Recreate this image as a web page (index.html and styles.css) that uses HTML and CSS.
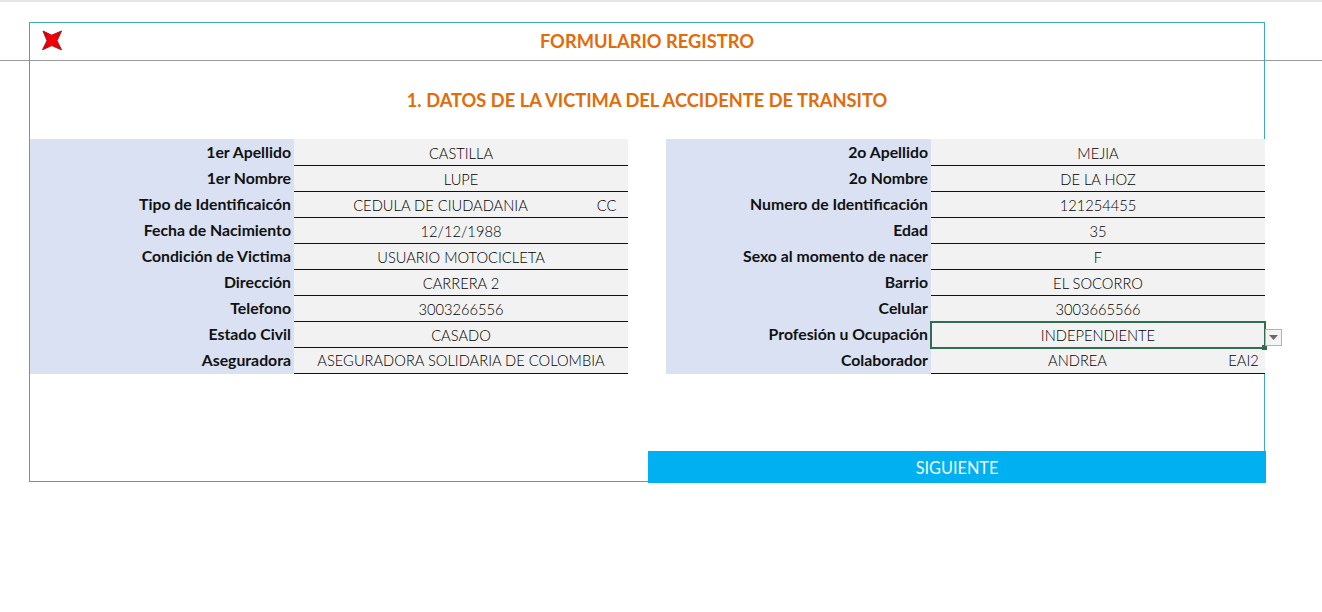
FILE: index.html
```html
<!DOCTYPE html>
<html lang="es">
<head>
<meta charset="utf-8">
<title>Formulario Registro</title>
<link rel="stylesheet" href="styles.css">
</head>
<body>
<div class="topline"></div>
<div class="ruler"></div>
<main class="frame">
  <header class="head">
    <svg class="logo" width="22" height="22" viewBox="0 0 22 22" aria-hidden="true">
      <defs><radialGradient id="g"><stop offset="0.6" stop-color="#f00008"/><stop offset="1" stop-color="#b80a12"/></radialGradient></defs>
      <path d="M2 2 L10.7 6.2 L20.5 2 L16 11.7 L20.5 20.8 L10.7 16.6 L1.5 20.8 L6 11.7 Z" fill="url(#g)" stroke="#c40c14" stroke-width="1" stroke-linejoin="round"/>
    </svg>
    <h1 class="title">FORMULARIO REGISTRO</h1>
  </header>
  <h2 class="subtitle">1. DATOS DE LA VICTIMA DEL ACCIDENTE DE TRANSITO</h2>
  <section class="columns">
    <div class="table">
      <div class="row"><div class="label">1er Apellido</div><div class="value">CASTILLA</div></div>
      <div class="row"><div class="label">1er Nombre</div><div class="value">LUPE</div></div>
      <div class="row"><div class="label">Tipo de Identificaicón</div><div class="value split"><span>CEDULA DE CIUDADANIA</span><span class="code">CC</span></div></div>
      <div class="row"><div class="label">Fecha de Nacimiento</div><div class="value">12/12/1988</div></div>
      <div class="row"><div class="label">Condición de Victima</div><div class="value">USUARIO MOTOCICLETA</div></div>
      <div class="row"><div class="label">Dirección</div><div class="value">CARRERA 2</div></div>
      <div class="row"><div class="label">Telefono</div><div class="value">3003266556</div></div>
      <div class="row"><div class="label">Estado Civil</div><div class="value">CASADO</div></div>
      <div class="row"><div class="label">Aseguradora</div><div class="value">ASEGURADORA SOLIDARIA DE COLOMBIA</div></div>
    </div>
    <div class="table wide">
      <div class="row"><div class="label">2o Apellido</div><div class="value">MEJIA</div></div>
      <div class="row"><div class="label">2o Nombre</div><div class="value">DE LA HOZ</div></div>
      <div class="row"><div class="label">Numero de Identificación</div><div class="value">121254455</div></div>
      <div class="row"><div class="label">Edad</div><div class="value">35</div></div>
      <div class="row"><div class="label">Sexo al momento de nacer</div><div class="value">F</div></div>
      <div class="row"><div class="label">Barrio</div><div class="value">EL SOCORRO</div></div>
      <div class="row"><div class="label">Celular</div><div class="value">3003665566</div></div>
      <div class="row"><div class="label">Profesión u Ocupación</div><div class="value selected">INDEPENDIENTE<i class="handle"></i><b class="drop"><svg width="9" height="5" viewBox="0 0 9 5" aria-hidden="true"><path d="M0 0H9L4.5 5Z" fill="#6a6a6a"/></svg></b></div></div>
      <div class="row"><div class="label">Colaborador</div><div class="value split"><span>ANDREA</span><span class="code">EAI2</span></div></div>
    </div>
  </section>
  <div class="actions"><button class="next">SIGUIENTE</button></div>
</main>
</body>
</html>
```
FILE: styles.css
```css
* { box-sizing: border-box; }
html, body { margin: 0; padding: 0; background: #fff; }
body {
  height: 612px;
  overflow: hidden;
  font-family: Lato, "Open Sans", "Liberation Sans", sans-serif;
  color: #000;
  position: relative;
  padding: 22px 0 0 29px;
}
.topline { position: absolute; left: 0; right: 0; top: 0; height: 2px; background: #e6e6e6; }
.ruler { position: absolute; left: 0; right: 0; top: 60px; height: 1px; background: #9a9a9a; }
.frame {
  position: relative;
  width: 1236px;
  height: 460px;
  border: 1px solid #3fa9c2;
  display: flex;
  flex-direction: column;
}
.head {
  height: 37px;
  padding-bottom: 2px;
  display: flex;
  align-items: center;
  justify-content: center;
  position: relative;
}
.logo { position: absolute; left: 11px; top: 6px; }
.title {
  margin: 0;
  font-size: 18.3px;
  font-weight: 700;
  color: #e26b0a;
}
.subtitle {
  margin: 0;
  height: 79px;
  padding-top: 27px;
  text-align: center;
  font-size: 18.3px;
  line-height: 26px;
  font-weight: 700;
  color: #e26b0a;
}
.columns { display: flex; gap: 38px; }
.table { width: 598px; flex: none; display: flex; flex-direction: column; }
.wide { width: 599px; }
.row { display: flex; height: 26px; }
.row:first-child { height: 27px; }
.label {
  width: 264px;
  flex: none;
  background: #d9e1f2;
  text-align: right;
  padding-right: 3px;
  font-size: 15.8px;
  font-weight: 700;
  line-height: 24px;
  color: #111;
}
.wide .label { width: 265px; }
.row:first-child .label { line-height: 26px; }
.value {
  flex: 1;
  position: relative;
  background: #f2f2f2;
  border-bottom: 1px solid #111;
  text-align: center;
  font-size: 14.7px;
  font-weight: 300;
  line-height: 26px;
}
.row:first-child .value { line-height: 28px; }
.row:last-child .value { line-height: 25px; }
.split { display: flex; }
.split span:first-child { flex: 1; }
.code { width: 41px; flex: none; padding-right: 2px; }
.selected { border-bottom-color: transparent; z-index: 1; }
.selected::before {
  content: "";
  position: absolute;
  left: -1px; right: -1px; top: -1px; bottom: -2px;
  border: 2px solid #2f6f4f;
}
.handle {
  position: absolute;
  right: -2px; bottom: -3px;
  width: 5px; height: 5px;
  background: #2f6f4f;
}
.drop {
  position: absolute;
  right: -17px; top: 7px;
  width: 17px; height: 17px;
  border: 1px solid #b4b4b4;
  background: #f4f4f4;
  display: flex;
  align-items: center;
  justify-content: center;
}
.actions { position: absolute; left: 618px; top: 428px; }
.next {
  display: block;
  width: 618px;
  height: 32px;
  border: 0;
  background: #00b0f0;
  color: #f2fbff;
  font: 400 16.3px Lato, "Open Sans", sans-serif;
}
```
